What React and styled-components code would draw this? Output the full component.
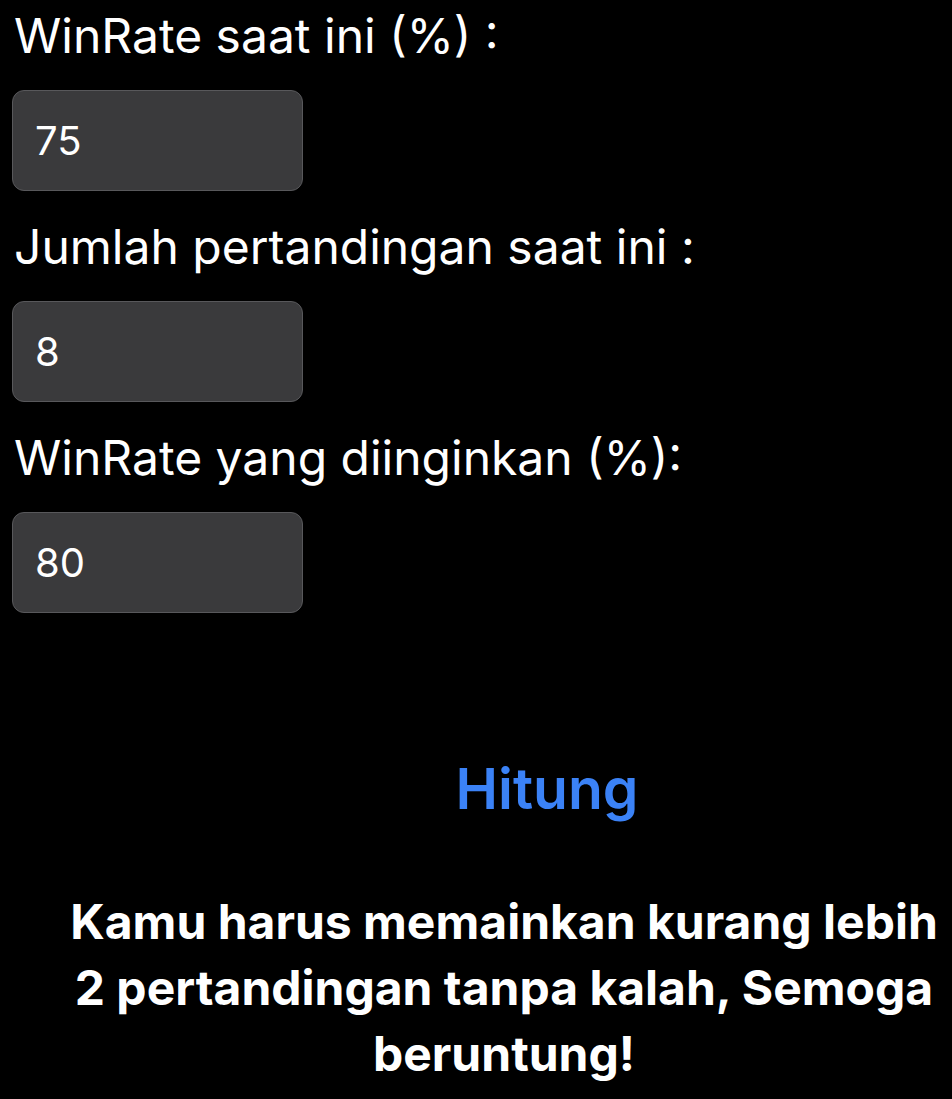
import React from "react";
import styled, { createGlobalStyle } from "styled-components";

const Global = createGlobalStyle`
  html, body { margin: 0; padding: 0; background: #000; }
  body { font-family: Inter, "Noto Sans", sans-serif; color: #fff; }
`;

const Page = styled.div`
  width: 952px;
  height: 1099px;
  overflow: hidden;
  background: #000;
  box-sizing: border-box;
  padding: 8px 0 0 12px;
  display: flex;
  flex-direction: column;
`;

const Field = styled.div`
  display: flex;
  flex-direction: column;
  gap: 26px;
  margin-bottom: 28px;
`;

const Label = styled.label`
  font-size: 48px;
  line-height: 56px;
  font-weight: 400;
  color: #fff;
  padding-left: 2px;
`;

const Input = styled.input`
  width: 291px;
  height: 101px;
  box-sizing: border-box;
  background: #3a3a3c;
  border: 1px solid #58585b;
  border-radius: 12px;
  color: #fff;
  font-family: Inter, "Noto Sans", sans-serif;
  font-size: 40px;
  padding: 0 0 0 22px;
  outline: none;
`;

const ButtonRow = styled.div`
  display: flex;
  justify-content: center;
  padding: 113px 0 0 130px;
`;

const Button = styled.button`
  background: none;
  border: none;
  color: #3b82f6;
  font-family: Inter, "Noto Sans", sans-serif;
  font-size: 57px;
  font-weight: 600;
  padding: 0;
  cursor: pointer;
`;

const Result = styled.p`
  margin: 66px 0 0 52px;
  width: 880px;
  text-align: center;
  font-size: 48px;
  line-height: 66px;
  font-weight: 700;
  letter-spacing: 0;
  color: #fff;
`;

const fields = [
  { label: "WinRate saat ini (%) :", value: "75" },
  { label: "Jumlah pertandingan saat ini :", value: "8" },
  { label: "WinRate yang diinginkan (%):", value: "80" },
];

export default function App() {
  return (
    <Page>
      <Global />
      {fields.map((f) => (
        <Field key={f.label}>
          <Label>{f.label}</Label>
          <Input defaultValue={f.value} inputMode="numeric" />
        </Field>
      ))}
      <ButtonRow>
        <Button>Hitung</Button>
      </ButtonRow>
      <Result>
        Kamu harus memainkan kurang lebih 2 pertandingan tanpa kalah, Semoga
        beruntung!
      </Result>
    </Page>
  );
}
